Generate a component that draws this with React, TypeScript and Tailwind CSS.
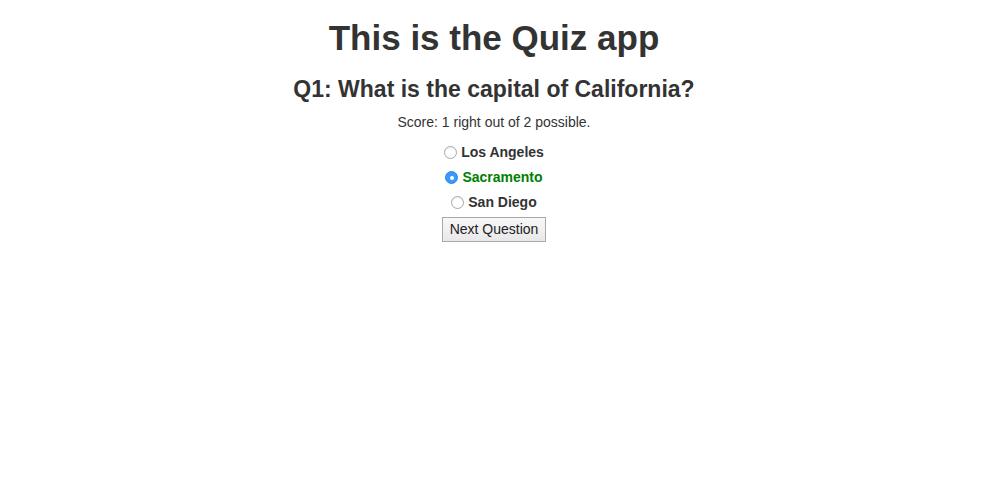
import React from "react";

const options = ["Los Angeles", "Sacramento", "San Diego"];

function Radio({ checked }: { checked: boolean }) {
  if (checked) {
    return (
      <span className="w-[13px] h-[13px] rounded-full bg-[#3b99fc] border border-[#2f86e6] flex items-center justify-center">
        <span className="w-[4px] h-[4px] rounded-full bg-white" />
      </span>
    );
  }
  return (
    <span className="w-[13px] h-[13px] rounded-full bg-white border border-[#a8a8a8] shadow-[inset_0_1px_1px_rgba(0,0,0,0.08)]" />
  );
}

export default function App() {
  const selected = "Sacramento";
  return (
    <div className="min-h-[498px] bg-white text-center text-[#333] font-['Liberation_Sans',Arial,sans-serif]">
      <h1 className="pt-[18px] text-[35px] leading-[40px] font-bold">This is the Quiz app</h1>
      <h3 className="mt-[18px] text-[23px] leading-[26px] font-bold">Q1: What is the capital of California?</h3>
      <p className="mt-[10px] text-[14px] leading-[20px]">Score: 1 right out of 2 possible.</p>
      <div className="mt-[8px] flex flex-col items-center">
        {options.map((o) => (
          <label key={o} className="h-[25px] flex items-center gap-[4px] text-[14px] font-bold">
            <Radio checked={o === selected} />
            <span className={o === selected ? "text-[#008000]" : ""}>{o}</span>
          </label>
        ))}
        <button className="mt-[2px] h-[25px] px-[7px] text-[14px] text-[#222] bg-[linear-gradient(#f8f8f8,#e8e8e8)] border border-[#a9a9a9]">
          Next Question
        </button>
      </div>
    </div>
  );
}
